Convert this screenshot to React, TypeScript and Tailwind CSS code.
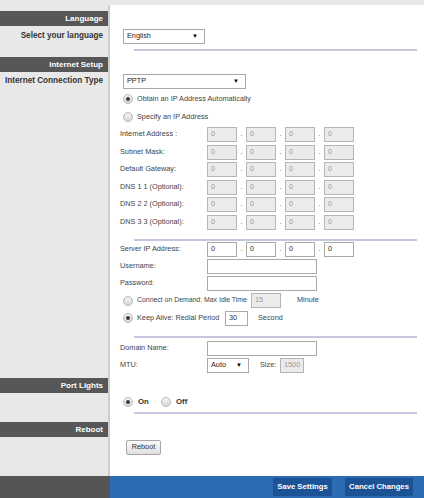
import type { ReactNode } from "react";
import clsx from "clsx";

function Radio({ checked }: { checked?: boolean }) {
  return (
    <span className="flex h-[10px] w-[10px] shrink-0 items-center justify-center rounded-full border border-[#b8b8b8] bg-linear-to-b from-[#f6f6f6] to-[#d8d8d8]">
      {checked && <span className="h-[4px] w-[4px] rounded-full bg-[#3a3a3a]" />}
    </span>
  );
}

function Box({ value, disabled, className }: { value?: string; disabled?: boolean; className?: string }) {
  return (
    <div
      className={clsx(
        "flex h-[15px] shrink-0 items-center border px-[3px] text-[7.3px]",
        disabled ? "border-[#b5b5b5] bg-[#ebebeb] text-[#9a9a9a]" : "border-[#a9a9a9] bg-white text-[#333]",
        className,
      )}
    >
      {value}
    </div>
  );
}

function Select({ value, className }: { value: string; className: string }) {
  return (
    <div
      className={clsx(
        "flex h-[15px] shrink-0 items-center justify-between border border-[#a9a9a9] bg-white pl-[3px] pr-[6px] text-[7.3px] text-[#222]",
        className,
      )}
    >
      <span>{value}</span>
      <span className="text-[6px] text-black">▼</span>
    </div>
  );
}

function Row({ className, left, children, right }: { className: string; left?: ReactNode; children?: ReactNode; right?: string }) {
  return (
    <div className={clsx("flex", className)}>
      <div className="w-[110px] shrink-0 border-r-2 border-[#cdcdcd] bg-[#e8e8e8]">{left}</div>
      <div className={clsx("flex flex-1 bg-white", right ?? "items-center")}>{children}</div>
    </div>
  );
}

function Bar({ label, className }: { label: string; className: string }) {
  return (
    <div className={clsx("flex h-[15px] items-center justify-end bg-[#575757] pr-[5px] text-[8px] font-bold text-white", className)}>
      {label}
    </div>
  );
}

function SideLabel({ children }: { children: ReactNode }) {
  return <div className="flex h-full items-center justify-end pr-[5px] text-[8.2px] font-bold text-[#333]">{children}</div>;
}

function Divider({ className }: { className: string }) {
  return <div className={clsx("ml-[24px] mr-[7px] h-[2px] flex-1 bg-[#c6c6de]", className)} />;
}

function IpRow({ label, disabled, className }: { label: string; disabled?: boolean; className: string }) {
  return (
    <Row className={className}>
      <div className="flex items-center pl-[10px] text-[7.3px] text-[#444]">
        <span className="w-[87px]">{label}</span>
        {[0, 1, 2, 3].map((i) => (
          <div key={i} className="flex items-center">
            {i > 0 && <span className="w-[9px] text-center">.</span>}
            <Box value="0" disabled={disabled} className="w-[30px]" />
          </div>
        ))}
      </div>
    </Row>
  );
}

function FieldRow({ label, className, children }: { label: string; className: string; children?: ReactNode }) {
  return (
    <Row className={className}>
      <div className="flex items-center pl-[10px] text-[7.3px] text-[#444]">
        <span className="w-[87px]">{label}</span>
        {children}
      </div>
    </Row>
  );
}

export default function App() {
  return (
    <div className="h-[498px] w-full overflow-hidden bg-[#e8e8e8] font-['Liberation_Sans',Arial,sans-serif]">
      <div className="h-[5px] bg-[#e8e8e8]" />

      <Row className="h-[23px]" left={<Bar label="Language" className="mt-[6px]" />} />
      <Row className="h-[17px]" left={<SideLabel>Select your language</SideLabel>}>
        <Select value="English" className="ml-[13px] w-[82px]" />
      </Row>
      <Row className="h-[11px]" right="items-start">
        <Divider className="mt-[4px]" />
      </Row>

      <Row className="h-[17px]" left={<Bar label="Internet Setup" className="mt-[1px]" />} />
      <Row className="h-[17px]" left={<SideLabel>Internet Connection Type</SideLabel>}>
        <Select value="PPTP" className="ml-[13px] w-[123px]" />
      </Row>
      <Row className="h-[18px]">
        <div className="flex items-center gap-[4px] pl-[13px] text-[7.3px] text-[#444]">
          <Radio checked />
          <span>Obtain an IP Address Automatically</span>
        </div>
      </Row>
      <Row className="h-[18px]">
        <div className="flex items-center gap-[4px] pl-[13px] text-[7.3px] text-[#444]">
          <Radio />
          <span>Specify an IP Address</span>
        </div>
      </Row>

      <IpRow label="Internet Address :" disabled className="h-[17.5px]" />
      <IpRow label="Subnet Mask:" disabled className="h-[17.5px]" />
      <IpRow label="Default Gateway:" disabled className="h-[17.5px]" />
      <IpRow label="DNS 1 1 (Optional):" disabled className="h-[17.5px]" />
      <IpRow label="DNS 2 2 (Optional):" disabled className="h-[17.5px]" />
      <IpRow label="DNS 3 3 (Optional):" disabled className="h-[17.5px]" />

      <Row className="h-[10px]" right="items-start">
        <Divider className="mt-[8px]" />
      </Row>

      <IpRow label="Server IP Address:" className="h-[17px]" />
      <FieldRow label="Username:" className="h-[17px]">
        <Box className="w-[110px]" />
      </FieldRow>
      <FieldRow label="Password:" className="h-[17px]">
        <Box className="w-[110px]" />
      </FieldRow>
      <Row className="h-[17px]">
        <div className="flex items-center whitespace-nowrap pl-[13px] text-[7.3px] text-[#444]">
          <Radio />
          <span className="ml-[4px] w-[114px] text-[6.9px]">Connect on Demand: Max Idle Time</span>
          <Box value="15" disabled className="w-[30px]" />
          <span className="ml-[16px]">Minute</span>
        </div>
      </Row>
      <Row className="h-[18px]">
        <div className="flex items-center whitespace-nowrap pl-[13px] text-[7.3px] text-[#444]">
          <Radio checked />
          <span className="ml-[4px] w-[88px]">Keep Alive: Redial Period</span>
          <Box value="30" className="w-[23px]" />
          <span className="ml-[10px]">Second</span>
        </div>
      </Row>

      <Row className="h-[13px]" right="items-start">
        <Divider className="mt-[9px]" />
      </Row>

      <FieldRow label="Domain Name:" className="h-[17px]">
        <Box className="w-[110px]" />
      </FieldRow>
      <FieldRow label="MTU:" className="h-[17px]">
        <Select value="Auto" className="w-[42px]" />
        <span className="ml-[11px] w-[20px]">Size:</span>
        <Box value="1500" disabled className="w-[24px]" />
      </FieldRow>

      <Row className="h-[21px]" left={<Bar label="Port Lights" className="mt-[4px]" />} />
      <Row className="h-[14px]">
        <div className="flex items-center pl-[13px] text-[7.8px] font-bold text-[#333]">
          <Radio checked />
          <span className="ml-[5px] w-[23px]">On</span>
          <Radio />
          <span className="ml-[5px]">Off</span>
        </div>
      </Row>
      <Row className="h-[9px]" right="items-start">
        <Divider className="mt-[3px]" />
      </Row>

      <Row className="h-[21px]" left={<Bar label="Reboot" className="mt-[4px]" />} />
      <Row className="h-[17px]">
        <button
          type="button"
          className="ml-[16px] flex h-[15px] w-[35px] items-center justify-center rounded-[2px] border border-[#a6a6a6] bg-linear-to-b from-[#fafafa] to-[#e0e0e0] text-[7.3px] text-[#333]"
        >
          Reboot
        </button>
      </Row>
      <Row className="h-[20px]" />

      <div className="flex h-[22px]">
        <div className="w-[110px] shrink-0 bg-[#555555]" />
        <div className="flex flex-1 items-center justify-end gap-[13px] bg-[#2b6cb3] pr-[11px]">
          <button type="button" className="h-[18px] w-[59px] bg-[#1c5396] text-[7.7px] font-bold text-white">
            Save Settings
          </button>
          <button type="button" className="h-[18px] w-[68px] bg-[#1c5396] text-[7.7px] font-bold text-white">
            Cancel Changes
          </button>
        </div>
      </div>
    </div>
  );
}
